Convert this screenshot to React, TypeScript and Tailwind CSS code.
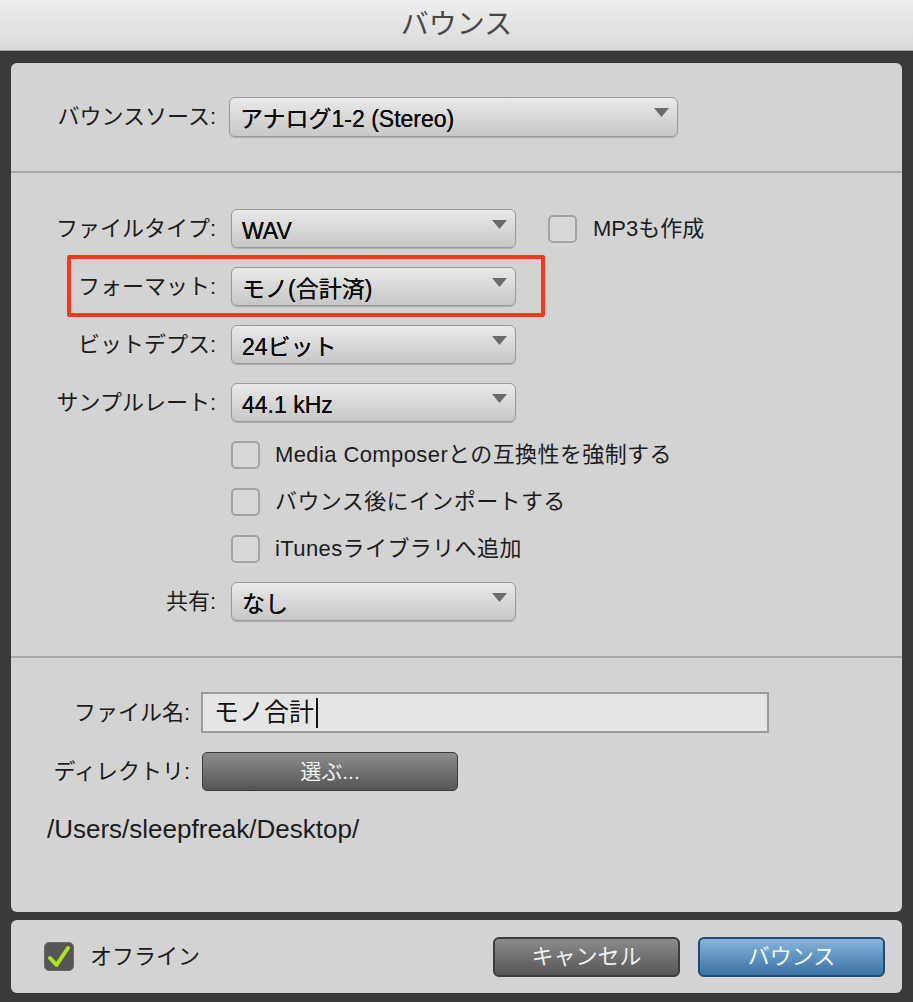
import React from 'react';

const Arrow = () => (
  <svg width="15" height="9" viewBox="0 0 15 9" className="absolute right-[8px] top-[10px]">
    <path d="M0 0 H15 L7.5 9 Z" fill="#6b6b6b" />
  </svg>
);

const Select = ({ value, wide }: { value: string; wide?: boolean }) => (
  <div
    className={`relative flex items-center pl-[10px] rounded-[6px] border border-[#9a9a9a] bg-gradient-to-b from-[#e9e9e9] to-[#c7c7c7] shadow-[0_1px_1px_rgba(0,0,0,0.18)] ${
      wide ? 'w-[449px] h-[40px]' : 'w-[285px] h-[39px]'
    }`}
  >
    <span className="pt-[5px] text-[23px] leading-none text-[#0a0a0a] [text-shadow:0_0_0.4px_#000]">{value}</span>
    <Arrow />
  </div>
);

const Box = () => (
  <div className="w-[29px] h-[28px] shrink-0 rounded-[5px] border-2 border-[#a3a3a3] bg-[#d7d7d7]" />
);

const Row = ({ label, children }: { label: string; children: React.ReactNode }) => (
  <div className="flex items-center">
    <div className="w-[205px] text-right text-[22px] leading-none text-[#1c1c1c]">{label}</div>
    <div className="ml-[15px] flex items-center">{children}</div>
  </div>
);

const CheckRow = ({ label }: { label: string }) => (
  <div className="flex items-center pl-[220px]">
    <Box />
    <span className="ml-[15px] text-[22px] leading-none tracking-[0.4px] text-[#1c1c1c]">{label}</span>
  </div>
);

const Divider = () => <div className="h-[2px] bg-[#a9a9a9]" />;

export default function App() {
  return (
    <div className="w-[913px] h-[1002px] bg-[#3a3a3a] flex flex-col font-['Liberation_Sans','Noto_Sans_CJK_JP',sans-serif]">
      <div className="h-[51px] shrink-0 flex items-center justify-center bg-gradient-to-b from-[#eeeeee] to-[#d9d9d9] border-b border-[#a5a5a5]">
        <span className="text-[28px] leading-none text-[#474747]">バウンス</span>
      </div>

      <div className="flex flex-col gap-[8px] px-[11px] pt-[12px]">
        <div className="h-[849px] rounded-[6px] bg-[#d3d3d3] flex flex-col">
          <div className="pt-[34px] pb-[34px]">
            <div className="flex items-center">
              <div className="w-[205px] text-right text-[22px] leading-none text-[#1c1c1c]">バウンスソース:</div>
              <div className="ml-[13px]">
                <Select value="アナログ1-2 (Stereo)" wide />
              </div>
            </div>
          </div>
          <Divider />

          <div className="pt-[36px] pb-[35px] flex flex-col gap-[19px]">
            <Row label="ファイルタイプ:">
              <Select value="WAV" />
              <div className="ml-[32px]">
                <Box />
              </div>
              <span className="ml-[16px] text-[22px] leading-none text-[#1c1c1c]">MP3も作成</span>
            </Row>
            <div className="relative">
              <Row label="フォーマット:">
                <Select value="モノ(合計済)" />
              </Row>
              <div className="absolute left-[56px] top-[-12px] w-[478px] h-[62px] border-[4px] border-[#f43a1b] rounded-[2px] pointer-events-none" />
            </div>
            <Row label="ビットデプス:">
              <Select value="24ビット" />
            </Row>
            <Row label="サンプルレート:">
              <Select value="44.1 kHz" />
            </Row>
            <CheckRow label="Media Composerとの互換性を強制する" />
            <CheckRow label="バウンス後にインポートする" />
            <CheckRow label="iTunesライブラリへ追加" />
            <Row label="共有:">
              <Select value="なし" />
            </Row>
          </div>
          <Divider />

          <div className="pt-[34px] flex flex-col">
            <div className="flex items-center">
              <div className="w-[179px] text-right text-[22px] leading-none text-[#1c1c1c]">ファイル名:</div>
              <div className="ml-[11px] w-[568px] h-[41px] flex items-center pl-[11px] bg-[#e5e5e5] border-2 border-[#9a9a9a]">
                <span className="text-[25px] leading-none text-[#111]">モノ合計</span>
                <span className="ml-[2px] w-[2px] h-[30px] bg-[#111]" />
              </div>
            </div>
            <div className="flex items-center mt-[19px]">
              <div className="w-[179px] text-right text-[22px] leading-none text-[#1c1c1c]">ディレクトリ:</div>
              <div className="ml-[12px] w-[256px] h-[39px] flex items-center justify-center rounded-[5px] border border-[#3a3a3a] bg-gradient-to-b from-[#8d8d8d] to-[#565656]">
                <span className="text-[21px] leading-none text-[#f2f2f2]">選ぶ...</span>
              </div>
            </div>
            <div className="mt-[24px] pl-[36px] text-[26px] leading-[28px] text-[#1c1c1c]">/Users/sleepfreak/Desktop/</div>
          </div>
        </div>

        <div className="h-[73px] rounded-[6px] bg-[#d3d3d3] flex items-center pl-[33px] pr-[17px]">
          <div className="w-[30px] h-[29px] rounded-[5px] border border-[#6a6a6a] bg-[#565656] flex items-center justify-center">
            <svg width="24" height="24" viewBox="0 0 24 24">
              <path d="M3 13 L9.5 20 L21 3" fill="none" stroke="#aee51c" strokeWidth="4" strokeLinecap="round" strokeLinejoin="round" />
            </svg>
          </div>
          <span className="ml-[16px] text-[22px] leading-none text-[#1c1c1c]">オフライン</span>
          <div className="ml-auto flex gap-[18px]">
            <div className="w-[187px] h-[40px] flex items-center justify-center rounded-[6px] border-2 border-[#3c3c3c] bg-gradient-to-b from-[#8c8c8c] to-[#575757]">
              <span className="text-[22px] leading-none text-[#f0f0f0]">キャンセル</span>
            </div>
            <div className="w-[187px] h-[40px] flex items-center justify-center rounded-[6px] border-2 border-[#1f4a72] bg-gradient-to-b from-[#86b6de] to-[#3a72a3]">
              <span className="text-[22px] leading-none text-[#f4f8fc]">バウンス</span>
            </div>
          </div>
        </div>
      </div>
    </div>
  );
}
